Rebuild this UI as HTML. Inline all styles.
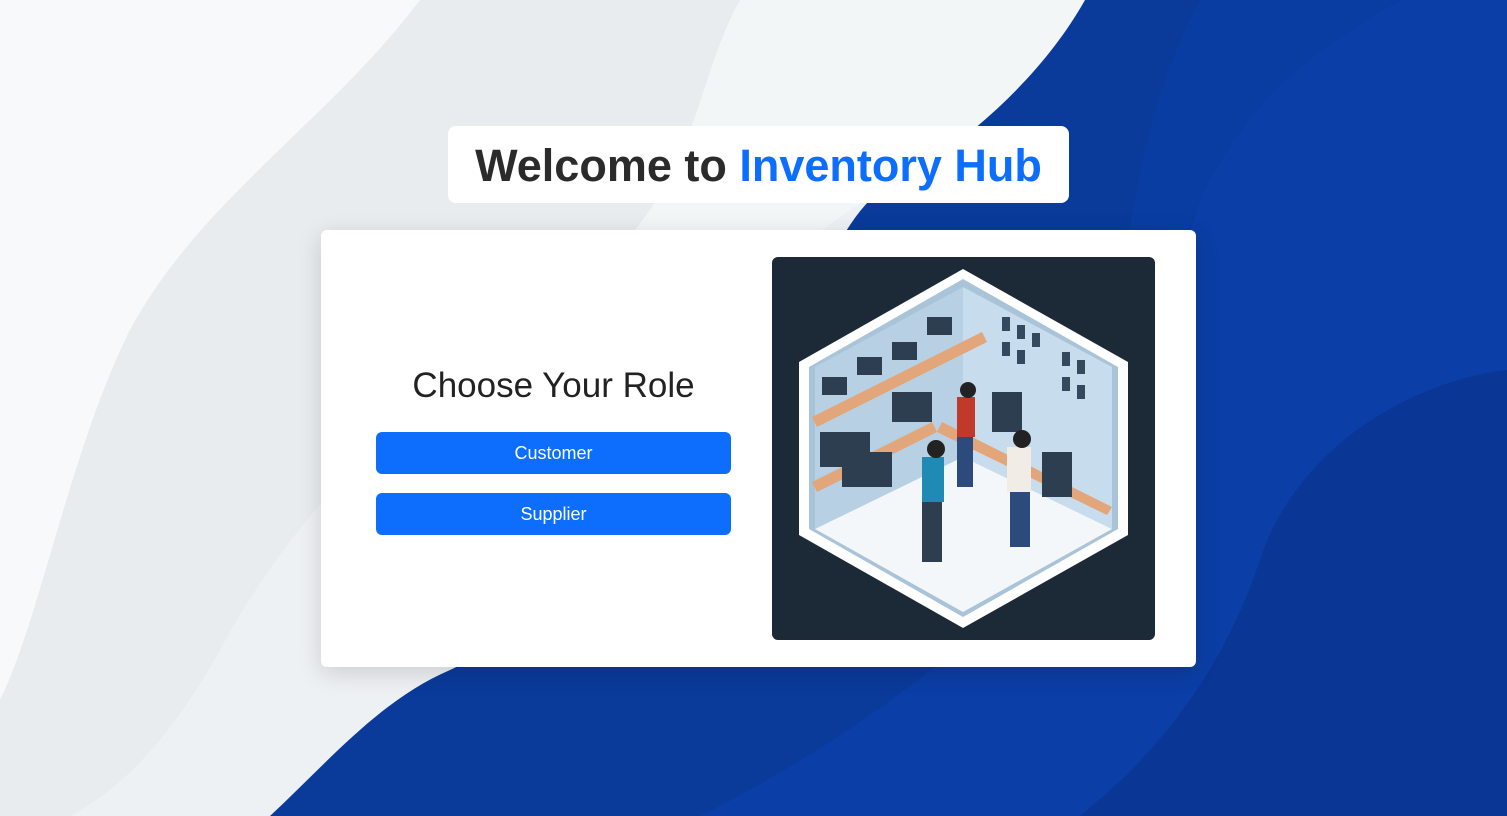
<!DOCTYPE html>
<html><head><meta charset="utf-8"><style>
html,body{margin:0;padding:0;width:1507px;height:816px;overflow:hidden;font-family:"Liberation Sans",sans-serif}
#bg{position:absolute;left:0;top:0}
.title{position:absolute;left:448px;top:126px;width:621px;height:77px;background:#fff;border-radius:8px;text-align:center;line-height:80px;font-size:45px;font-weight:bold;color:#2b2b2b}
.title span{color:#0d6efd}
.card{position:absolute;left:321px;top:230px;width:875px;height:437px;background:#fff;border-radius:6px;box-shadow:0 6px 24px rgba(0,0,0,0.15)}
h2{position:absolute;left:55px;width:355px;top:136px;margin:0;text-align:center;font-weight:normal;font-size:35px;color:#222}
.btn{position:absolute;left:55px;width:355px;height:42px;background:#0d6efd;border-radius:6px;color:#fff;text-align:center;line-height:43px;font-size:18px}
.img{position:absolute;left:451px;top:27px;width:383px;height:383px;background:#1c2936;border-radius:6px;overflow:hidden}
</style></head><body>
<svg id="bg" width="1507" height="816" viewBox="0 0 1507 816">
<rect width="1507" height="816" fill="#eef1f3"/>
<path d="M0 0 H420 C330 120 200 200 130 330 C70 450 40 620 0 700 Z" fill="#f7f9fa"/>
<path d="M420 0 H740 C690 90 700 200 560 300 C430 380 300 500 220 650 C170 740 120 790 70 816 H0 V700 C40 620 70 450 130 330 C200 200 330 120 420 0Z" fill="#e8ecee"/>
<path d="M740 0 H1085 C1040 80 960 150 880 190 C820 230 780 260 740 300 L560 300 C700 200 690 90 740 0Z" fill="#f3f6f7"/>
<path d="M1085 0 H1507 V816 H270 C330 760 380 700 450 670 C600 600 700 520 760 420 C800 330 830 240 870 200 C960 150 1040 80 1085 0Z" fill="#0a3a9a"/>
<path d="M1400 0 H1507 V370 C1420 380 1300 440 1260 560 C1220 680 1150 760 1080 816 H700 C850 740 950 660 1060 560 C1140 480 1150 350 1200 200 C1250 90 1330 40 1400 0Z" fill="#0b3ea6"/>
<path d="M1507 370 V816 H1080 C1150 760 1220 680 1260 560 C1300 440 1420 380 1507 370Z" fill="#0a3796"/>
<path d="M1200 0 H1400 C1330 40 1250 90 1200 200 C1160 300 1140 380 1100 420 C1130 300 1120 150 1200 0Z" fill="#0940a8" opacity="0.6"/>
</svg>
<div class="title">Welcome to <span>Inventory Hub</span></div>
<div class="card">
<h2>Choose Your Role</h2>
<div class="btn" style="top:202px">Customer</div>
<div class="btn" style="top:263px">Supplier</div>
<div class="img"><svg width="383" height="383" viewBox="0 0 383 383">
<polygon points="191,12 356,105 356,278 191,371 27,278 27,105" fill="#fff"/>
<polygon points="191,22 346,110 346,272 191,360 37,272 37,110" fill="#a9c4d8"/>
<polygon points="191,30 191,200 340,272 340,110" fill="#c7dcec"/>
<polygon points="191,30 191,200 43,272 43,110" fill="#b7d0e4"/>
<polygon points="191,200 340,272 191,355 43,272" fill="#f4f7f9"/>
<polygon points="40,160 210,75 215,85 45,170" fill="#e3a57a"/>
<polygon points="40,225 160,165 165,175 45,235" fill="#e3a57a"/>
<polygon points="170,165 340,250 335,258 165,175" fill="#e3a57a"/>
<g fill="#2c3e50"><rect x="50" y="120" width="25" height="18"/><rect x="85" y="100" width="25" height="18"/><rect x="120" y="85" width="25" height="18"/><rect x="155" y="60" width="25" height="18"/><rect x="48" y="175" width="50" height="35"/><rect x="70" y="195" width="50" height="35"/><rect x="120" y="135" width="40" height="30"/><rect x="220" y="135" width="30" height="40"/><rect x="270" y="195" width="30" height="45"/></g>
<g fill="#34495e"><rect x="230" y="60" width="8" height="14"/><rect x="245" y="68" width="8" height="14"/><rect x="260" y="76" width="8" height="14"/><rect x="290" y="95" width="8" height="14"/><rect x="305" y="103" width="8" height="14"/><rect x="290" y="120" width="8" height="14"/><rect x="305" y="128" width="8" height="14"/><rect x="230" y="85" width="8" height="14"/><rect x="245" y="93" width="8" height="14"/></g>
<rect x="185" y="140" width="18" height="40" fill="#c0392b"/><rect x="185" y="180" width="16" height="50" fill="#2c4a7c"/><circle cx="196" cy="133" r="8" fill="#222"/>
<rect x="150" y="200" width="22" height="45" fill="#1f8ab3"/><rect x="150" y="245" width="20" height="60" fill="#2c3e50"/><circle cx="164" cy="192" r="9" fill="#222"/>
<rect x="235" y="190" width="24" height="45" fill="#f1ede6"/><rect x="238" y="235" width="20" height="55" fill="#2c4a7c"/><circle cx="250" cy="182" r="9" fill="#222"/>
</svg></div>
</div>
</body></html>
